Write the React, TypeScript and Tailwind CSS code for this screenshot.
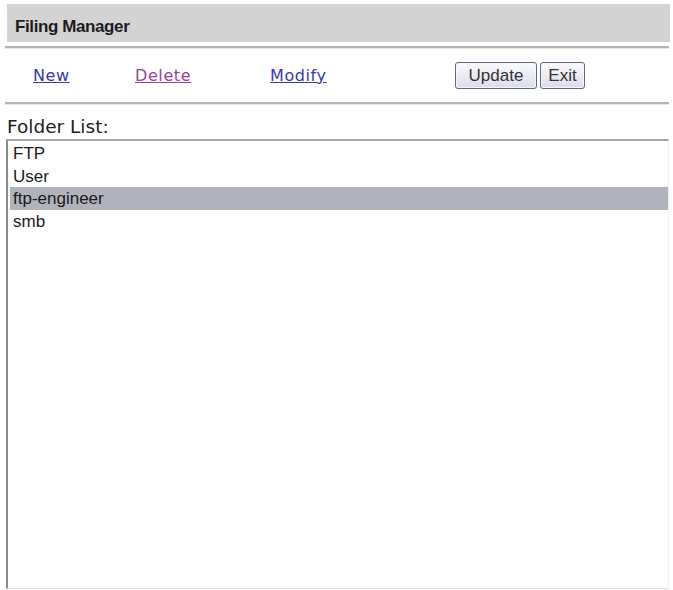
import React, { useState } from 'react';

const folders = ['FTP', 'User', 'ftp-engineer', 'smb'];

// Thin grooved rule used between the title, the toolbar and the list
const Rule = () => (
    <div className="mx-[5px] w-[664px] h-[3px] bg-[#b4b4b4] border-b border-[#e6e6e6]" />
);

const ToolButton: React.FC<{ label: string; className?: string }> = ({ label, className }) => (
    <button
        className={`h-[27px] rounded-[3px] border border-[#5b6b7a] bg-gradient-to-b from-[#fbfbfd] to-[#dcdbea] text-[17px] leading-none text-[#333] shadow-[inset_0_0_0_1px_#f4f4fa] ${className ?? ''}`}
        style={{ fontFamily: '"Liberation Sans", Arial, sans-serif' }}
    >
        {label}
    </button>
);

export default function App() {
    const [selected, setSelected] = useState('ftp-engineer');

    return (
        <div className="w-[673px] h-[590px] bg-white overflow-hidden">
            {/* Title bar */}
            <div className="mx-[7px] mt-[4px] w-[663px] h-[38px] bg-[#d3d3d3] pl-[8px] pt-[14px]">
                <span
                    className="block text-[17px] font-bold leading-none tracking-[-0.4px] text-[#1c1c1c]"
                    style={{ fontFamily: '"Liberation Sans", Arial, sans-serif' }}
                >
                    Filing Manager
                </span>
            </div>

            <div className="h-[4px]" />
            <Rule />

            {/* Toolbar */}
            <div
                className="flex items-center h-[53px] pl-[33px] text-[16px] tracking-[0.6px]"
                style={{ fontFamily: '"DejaVu Sans", Verdana, sans-serif' }}
            >
                <div className="w-[102px]">
                    <a href="#" className="underline text-[#3838a8]">New</a>
                </div>
                <div className="w-[135px]">
                    <a href="#" className="underline text-[#9b3f98]">Delete</a>
                </div>
                <div className="w-[185px]">
                    <a href="#" className="underline text-[#3838a8]">Modify</a>
                </div>
                <div className="flex gap-[3px] tracking-normal">
                    <ToolButton label="Update" className="w-[82px]" />
                    <ToolButton label="Exit" className="w-[45px]" />
                </div>
            </div>

            <Rule />

            {/* Folder list */}
            <div
                className="h-[34px] pl-[7px] pt-[13px] text-[18.5px] leading-none text-[#222]"
                style={{ fontFamily: '"DejaVu Sans", Verdana, sans-serif' }}
            >
                Folder List:
            </div>
            <div
                className="ml-[6px] w-[663px] h-[450px] border-t-2 border-l-2 border-t-[#a5a5a5] border-l-[#8c8c8c] border-r border-b border-r-[#f0f0f0] border-b-[#dedede] pt-[1px] pl-[2px] text-[17px] text-[#1a1a1a]"
                style={{ fontFamily: '"Liberation Sans", Arial, sans-serif' }}
            >
                {folders.map(name => (
                    <div
                        key={name}
                        onClick={() => setSelected(name)}
                        className={`h-[22.5px] leading-[24px] pl-[3px] cursor-default ${
                            selected === name ? 'bg-[#b0b3bb]' : ''
                        }`}
                    >
                        {name}
                    </div>
                ))}
            </div>
        </div>
    );
}
